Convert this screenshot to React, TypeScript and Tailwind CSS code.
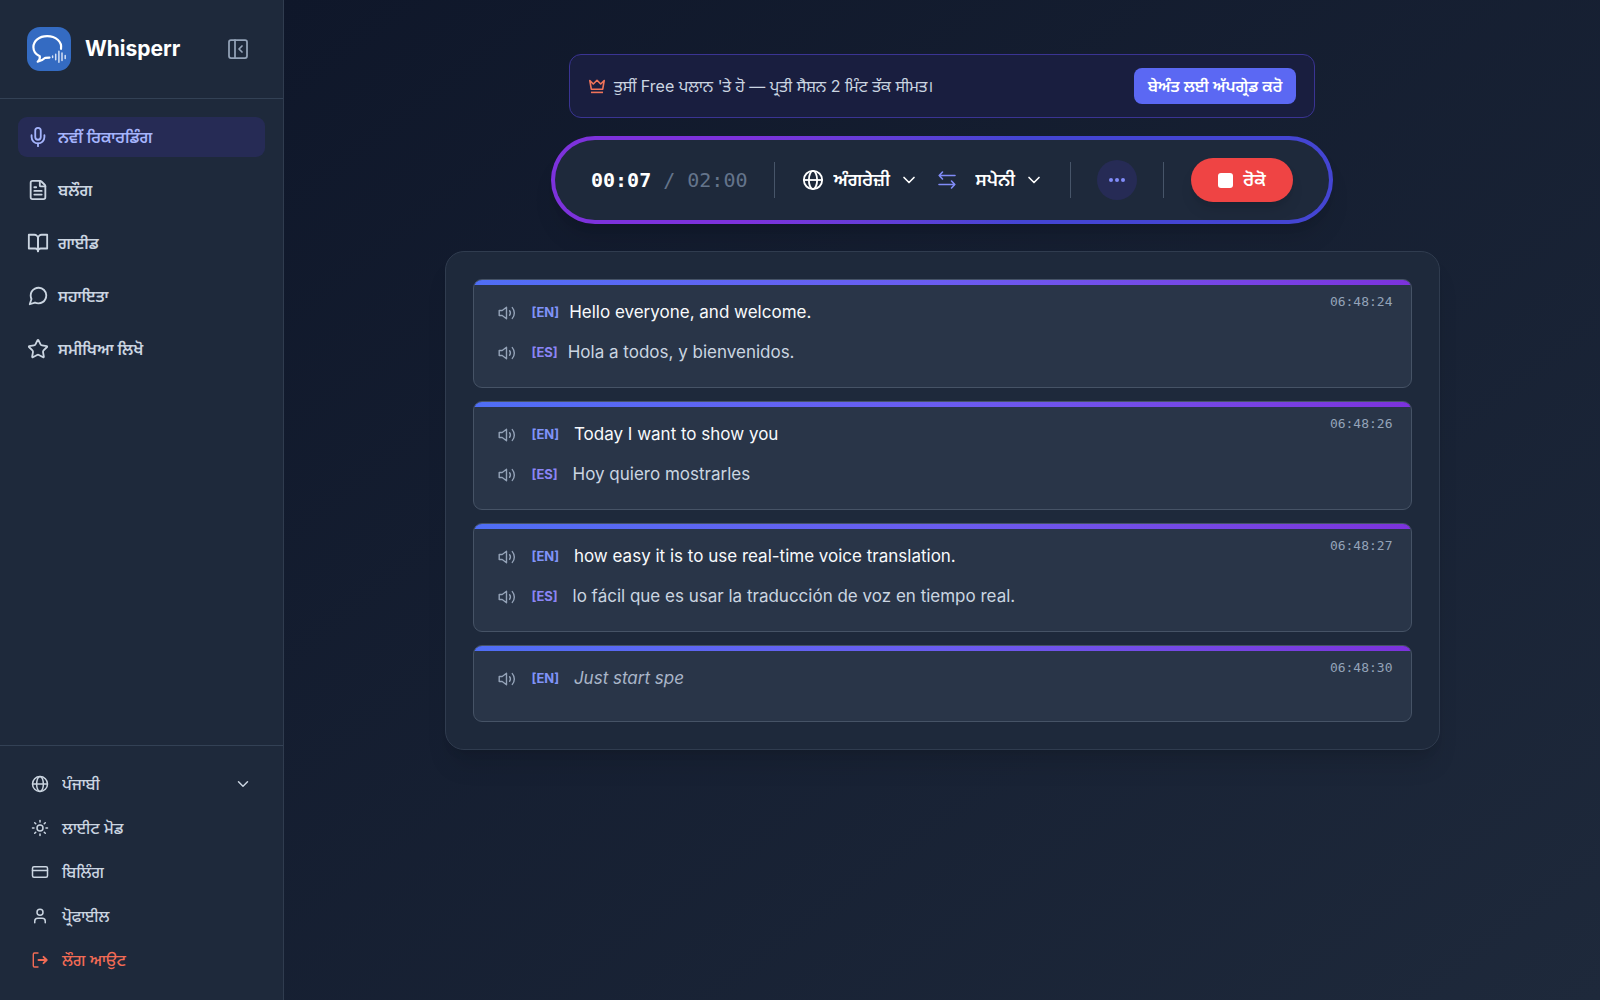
import type { ComponentType, SVGProps } from "react";
import { ChevronDown, CreditCard, FileText, Mic, PanelLeftClose, Star, Sun, User } from "lucide-react";
import { FiBookOpen, FiMessageCircle } from "react-icons/fi";

type IconType = ComponentType<{ className?: string }>;

function LogoIcon() {
  return (
    <svg viewBox="0 0 44 44" className="size-11 shrink-0" fill="none" aria-hidden="true">
      <rect width="44" height="44" rx="13" fill="#346bc2" />
      <path
        d="M34 21.8C35.3 14.500 28.500 9.200 20.200 9.200C12 9.200 6.400 14 6.400 20.200C6.400 24.300 9 27.500 12.800 29.300C13.200 31.500 12.300 33.200 10.700 34.700C14.200 34.200 16.400 32.600 18.200 30.800L22.500 30.600"
        stroke="#fff"
        strokeWidth="2.2"
        strokeLinecap="round"
        strokeLinejoin="round"
      />
      <path
        d="M25.600 29v1.500M28.700 27.200v5.500M31.900 24.300v11M35 26v7.500M38.200 28.500v3"
        stroke="#d3e0f5"
        strokeWidth="1.5"
        strokeLinecap="round"
      />
    </svg>
  );
}

function GlobeIcon(props: SVGProps<SVGSVGElement>) {
  return (
    <svg viewBox="0 0 24 24" fill="none" stroke="currentColor" strokeWidth="2" aria-hidden="true" {...props}>
      <circle cx="12" cy="12" r="10" />
      <ellipse cx="12" cy="12" rx="4.500" ry="10" />
      <path d="M2 12h20" />
    </svg>
  );
}

function CrownIcon({ className }: { className?: string }) {
  return (
    <svg
      viewBox="0 0 18 18"
      fill="none"
      stroke="currentColor"
      strokeWidth="1.6"
      className={className}
      aria-hidden="true"
    >
      <path d="M1.800 3.500L3.300 12.200h11.400l1.500-8.700-3.500 3.500L9 3.300 5.300 7z" strokeLinejoin="round" />
      <path d="M3 15.400h12" />
    </svg>
  );
}

function LogoutIcon({ className }: { className?: string }) {
  return (
    <svg
      viewBox="0 0 18 18"
      fill="none"
      stroke="currentColor"
      strokeWidth="1.4"
      strokeLinecap="round"
      strokeLinejoin="round"
      className={className}
      aria-hidden="true"
    >
      <path d="M7 2H3.500A1.200 1.200 0 0 0 2.300 3.200v11.600A1.200 1.200 0 0 0 3.500 16H7" />
      <path d="M7.500 9h8M12.500 5.800L15.700 9l-3.200 3.200" strokeWidth="1.900" />
    </svg>
  );
}

function SwapIcon({ className }: { className?: string }) {
  return (
    <svg
      viewBox="0 0 20 20"
      fill="none"
      stroke="currentColor"
      strokeWidth="1.6"
      strokeLinecap="round"
      strokeLinejoin="round"
      className={className}
      aria-hidden="true"
    >
      <path d="M18 5.500H2.200M5.500 2L2.200 5.500L5.500 9" />
      <path d="M2 14.500h15.800M14.500 11l3.300 3.500l-3.300 3.500" />
    </svg>
  );
}

function SpeakerIcon({ className }: { className?: string }) {
  return (
    <svg
      viewBox="0 0 18 18"
      fill="none"
      stroke="currentColor"
      strokeWidth="1.4"
      strokeLinecap="round"
      strokeLinejoin="round"
      className={className}
      aria-hidden="true"
    >
      <path d="M1.200 6.500v5h3l4.300 3.300V3.200L4.200 6.500z" />
      <path d="M11.600 6.800a3.600 3.600 0 0 1 0 4.400M14.300 3.600a8.200 8.200 0 0 1 0 10.800" />
    </svg>
  );
}

const navItems: { label: string; icon: IconType; active?: boolean }[] = [
  { label: "ਨਵੀਂ ਰਿਕਾਰਡਿੰਗ", icon: Mic, active: true },
  { label: "ਬਲੌਗ", icon: FileText },
  { label: "ਗਾਈਡ", icon: FiBookOpen },
  { label: "ਸਹਾਇਤਾ", icon: FiMessageCircle },
  { label: "ਸਮੀਖਿਆ ਲਿਖੋ", icon: Star },
];

const accountItems: { label: string; icon: IconType }[] = [
  { label: "ਲਾਈਟ ਮੋਡ", icon: Sun },
  { label: "ਬਿਲਿੰਗ", icon: CreditCard },
  { label: "ਪ੍ਰੋਫਾਈਲ", icon: User },
];

type Line = { lang: "EN" | "ES"; text: string; partial?: boolean };

const segments: { time: string; lines: Line[] }[] = [
  {
    time: "06:48:24",
    lines: [
      { lang: "EN", text: "Hello everyone, and welcome." },
      { lang: "ES", text: "Hola a todos, y bienvenidos." },
    ],
  },
  {
    time: "06:48:26",
    lines: [
      { lang: "EN", text: " Today I want to show you" },
      { lang: "ES", text: " Hoy quiero mostrarles" },
    ],
  },
  {
    time: "06:48:27",
    lines: [
      { lang: "EN", text: " how easy it is to use real-time voice translation." },
      { lang: "ES", text: " lo fácil que es usar la traducción de voz en tiempo real." },
    ],
  },
  {
    time: "06:48:30",
    lines: [{ lang: "EN", text: " Just start spe", partial: true }],
  },
];

function Sidebar() {
  return (
    <aside className="flex w-[284px] shrink-0 flex-col border-r border-[#303c4f] bg-[#1e293b] text-[#cbd5e1]">
      <div className="flex items-center border-b border-[#334155] p-[27px]">
        <LogoIcon />
        <span className="ml-3.5 text-[21px] leading-7 font-bold text-white">Whisperr</span>
        <button type="button" aria-label="Collapse sidebar" className="mr-1.5 ml-auto text-[#94a3b8]">
          <PanelLeftClose className="size-6" strokeWidth={1.75} />
        </button>
      </div>

      <nav className="flex flex-1 flex-col gap-[13px] p-[18px]">
        {navItems.map(({ label, icon: Icon, active }) => (
          <a
            key={label}
            href="#"
            className={
              active
                ? "flex h-10 items-center gap-[9px] rounded-[9px] bg-[#262b55] px-[9px] text-base font-semibold text-[#a5b4fc]"
                : "flex h-10 items-center gap-[9px] rounded-[9px] px-[9px] text-base font-semibold"
            }
          >
            <Icon className="size-[22px] shrink-0" />
            {label}
          </a>
        ))}
      </nav>

      <div className="flex flex-col border-t border-[#334155] px-[31px] pt-4 pb-[18px]">
        <div className="flex h-11 items-center gap-[13px]">
          <GlobeIcon className="size-[18px] shrink-0" />
          <select
            aria-label="Interface language"
            className="min-w-0 flex-1 appearance-none bg-transparent text-base font-medium outline-none"
          >
            <option>ਪੰਜਾਬੀ</option>
          </select>
          <ChevronDown className="size-[18px] shrink-0" />
        </div>
        {accountItems.map(({ label, icon: Icon }) => (
          <a key={label} href="#" className="flex h-11 items-center gap-[13px] text-base font-medium">
            <Icon className="size-[18px] shrink-0" />
            {label}
          </a>
        ))}
        <button type="button" className="flex h-11 items-center gap-[13px] text-base font-medium text-[#f26b55]">
          <LogoutIcon className="size-[18px] shrink-0" />
          ਲੌਗ ਆਉਟ
        </button>
      </div>
    </aside>
  );
}

function UpgradeBanner() {
  return (
    <div className="flex h-16 w-full max-w-[746px] items-center rounded-xl border border-[#3a3493] bg-[#191e3f] px-[18px]">
      <CrownIcon className="size-[18px] shrink-0 text-[#f0735a]" />
      <p className="ml-2 text-base text-[#cbd5e1]">ਤੁਸੀਂ Free ਪਲਾਨ 'ਤੇ ਹੋ — ਪ੍ਰਤੀ ਸੈਸ਼ਨ 2 ਮਿੰਟ ਤੱਕ ਸੀਮਤ।</p>
      <button
        type="button"
        className="ml-auto flex h-9 w-[162px] items-center justify-center rounded-lg bg-[#5b68f3] text-base font-semibold whitespace-nowrap text-white"
      >
        ਬੇਅੰਤ ਲਈ ਅੱਪਗ੍ਰੇਡ ਕਰੋ
      </button>
    </div>
  );
}

function RecorderBar() {
  return (
    <div className="w-full max-w-[782px] rounded-full bg-linear-to-r from-[#7d32dc] from-25% to-[#4445d3] to-60% p-1 shadow-xl">
      <div className="flex h-20 items-center rounded-full bg-[#1e293b] px-9 text-white">
        <div className="flex gap-3 font-['DejaVu_Sans_Mono',monospace] text-xl whitespace-nowrap">
          <span className="font-bold">00:07</span>
          <span className="text-[#64748b]">/</span>
          <span className="text-[#64748b]">02:00</span>
        </div>
        <div className="ml-[27px] h-9 w-px bg-[#475569]" />
        <GlobeIcon className="ml-[27px] size-[22px] shrink-0" />
        <select
          aria-label="Source language"
          className="ml-[9px] w-[60px] appearance-none bg-transparent text-lg font-semibold outline-none"
        >
          <option>ਅੰਗਰੇਜ਼ੀ</option>
        </select>
        <ChevronDown className="ml-1.5 size-5 shrink-0" />
        <button type="button" aria-label="Swap languages" className="ml-[18px] text-[#818cf8]">
          <SwapIcon className="size-5" />
        </button>
        <select
          aria-label="Target language"
          className="ml-[18px] w-[43px] appearance-none bg-transparent text-lg font-semibold outline-none"
        >
          <option>ਸਪੇਨੀ</option>
        </select>
        <ChevronDown className="ml-1.5 size-5 shrink-0" />
        <div className="ml-[26px] h-9 w-px bg-[#475569]" />
        <button
          type="button"
          aria-label="More options"
          className="ml-[26px] flex size-10 shrink-0 items-center justify-center gap-0.5 rounded-full bg-[#262b55]"
        >
          <span className="size-1 rounded-full bg-[#818cf8]" />
          <span className="size-1 rounded-full bg-[#818cf8]" />
          <span className="size-1 rounded-full bg-[#818cf8]" />
        </button>
        <div className="ml-[26px] h-9 w-px bg-[#475569]" />
        <button
          type="button"
          className="ml-auto flex h-11 w-[102px] items-center justify-center gap-2.5 rounded-full bg-[#ef4444] text-lg font-semibold text-white shadow-lg"
        >
          <span className="size-[15px] rounded-[3px] bg-white" />
          ਰੋਕੋ
        </button>
      </div>
    </div>
  );
}

function SegmentCard({ time, lines }: { time: string; lines: Line[] }) {
  return (
    <li className="min-h-[77px] overflow-hidden rounded-[9px] border border-[#465366] bg-[#293548]">
      <div className="h-[5px] bg-linear-to-r from-[#4f6ef5] via-[#6a5cf0] via-50% to-[#7c32dc]" />
      <div className="flex justify-between pt-[7px] pr-[18px] pb-[15px] pl-6">
        <div>
          {lines.map(({ lang, text, partial }) => (
            <div key={lang} className="flex h-10 items-center">
              <button type="button" aria-label="Play audio" className="pt-0.5 text-[#94a3b8]">
                <SpeakerIcon className="size-[18px]" />
              </button>
              <span
                className={
                  lang === "EN"
                    ? "ml-4 pt-0.5 text-[13px] font-bold text-[#8093f8]"
                    : "ml-4 pt-0.5 text-[13px] font-bold text-[#8b85f5]"
                }
              >
                [{lang}]
              </span>
              <span
                className={
                  partial
                    ? "ml-2.5 text-[17px] leading-7 whitespace-pre text-[#a9b5c8] italic"
                    : lang === "EN"
                      ? "ml-2.5 text-[17px] leading-7 whitespace-pre text-[#f8fafc]"
                      : "ml-2.5 text-[17px] leading-7 whitespace-pre text-[#cbd5e1]"
                }
              >
                {text}
              </span>
            </div>
          ))}
        </div>
        <time className="font-['DejaVu_Sans_Mono',monospace] text-[13px] leading-5 text-[#94a3b8]">{time}</time>
      </div>
    </li>
  );
}

export default function App() {
  return (
    <div className="flex min-h-screen bg-[#0f172a] font-['Inter','Noto_Sans_Gurmukhi','Noto_Sans',sans-serif]">
      <Sidebar />
      <main className="flex flex-1 flex-col items-center bg-linear-to-br from-[#0f172a] to-[#1e293b] px-8 pt-[54px]">
        <UpgradeBanner />
        <div className="mt-[18px] flex w-full justify-center">
          <RecorderBar />
        </div>
        <ul className="mt-[27px] flex w-full max-w-[995px] flex-col gap-[13px] rounded-[19px] border border-[#303c4f] bg-[#1e293b] p-[27px] shadow-xl">
          {segments.map((segment) => (
            <SegmentCard key={segment.time} {...segment} />
          ))}
        </ul>
      </main>
    </div>
  );
}
